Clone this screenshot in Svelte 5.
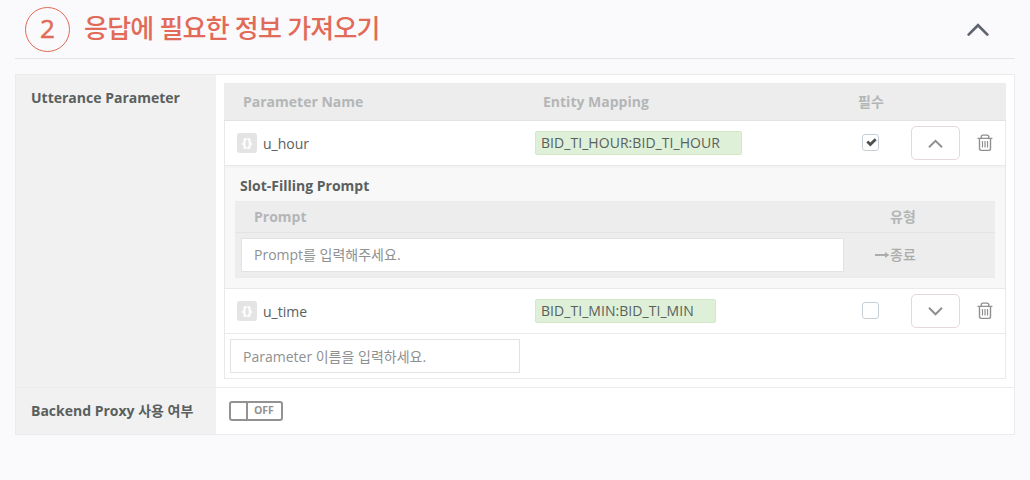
<script>
  const params = [
    { name: 'u_hour', entity: 'BID_TI_HOUR:BID_TI_HOUR', width: 207, required: true, open: true },
    { name: 'u_time', entity: 'BID_TI_MIN:BID_TI_MIN', width: 181, required: false, open: false }
  ];
</script>

<main>
  <header>
    <span class="step">2</span>
    <h1>응답에 필요한 정보 가져오기</h1>
    <svg class="fold" width="24" height="16" viewBox="0 0 24 16"><path d="M2.6 12.6 L12 3.2 L21.4 12.6" /></svg>
  </header>

  <section class="card">
    <div class="label first">Utterance Parameter</div>
    <div class="content">
      <div class="table">
        <div class="thead row">
          <span class="name">Parameter Name</span>
          <span class="entity">Entity Mapping</span>
          <span class="req">필수</span>
        </div>
        {#each params as p}
          <div class="row item">
            <div class="name"><span class="chip">&#123;&#125;</span><span class="pname">{p.name}</span></div>
            <div class="entity"><span class="tag" style="width:{p.width}px">{p.entity}</span></div>
            <div class="req">
              <span class="check">
                {#if p.required}
                  <svg width="17" height="17" viewBox="0 0 17 17"><path d="M5.3 7.6 L8.3 10.5 L13.7 5.2" /></svg>
                {/if}
              </span>
            </div>
            <button class="toggle" aria-label="toggle">
              <svg width="17" height="11" viewBox="0 0 17 11"><path d={p.open ? 'M2 9.3 L8.5 2.8 L15 9.3' : 'M2 1.8 L8.5 8.3 L15 1.8'} /></svg>
            </button>
            <svg class="trash" width="16" height="18" viewBox="0 0 16 18">
              <path d="M.6 4.4H15.4M4.3 4V2.5Q4.3 1.1 5.7 1.1H10.3Q11.7 1.1 11.7 2.5V4M2.5 4.4V14.6Q2.5 16.4 4.3 16.4H11.7Q13.5 16.4 13.5 14.6V4.4" />
              <path class="bars" d="M5.5 7V13.4M8 7V13.4M10.5 7V13.4" />
            </svg>
          </div>
          {#if p.open}
            <div class="slot">
              <h2>Slot-Filling Prompt</h2>
              <div class="prompt">
                <div class="phead"><span>Prompt</span><span>유형</span></div>
                <div class="pbody">
                  <div class="input">Prompt를 입력해주세요.</div>
                  <div class="end">
                    <svg width="15" height="8" viewBox="0 0 15 8"><path d="M0 3H10V1L14.4 4L10 7V5H0Z" /></svg><span>종료</span>
                  </div>
                </div>
              </div>
            </div>
          {/if}
        {/each}
        <div class="new"><div class="input">Parameter 이름을 입력하세요.</div></div>
      </div>
    </div>
    <div class="label second">Backend Proxy 사용 여부</div>
    <div class="content second">
      <div class="switch"><i></i><span>OFF</span></div>
    </div>
  </section>
</main>

<style>
  :global(body) { background: #fafafc; }
  * { box-sizing: border-box; }
  main {
    height: 480px;
    padding: 0 15px;
    background: #fafafc;
    font: 14px/20px 'Open Sans', 'Noto Sans CJK KR', sans-serif;
    color: #5a605e;
    white-space: nowrap;
  }
  header {
    display: flex;
    align-items: center;
    height: 59px;
    padding: 0 25px 0 10px;
    border-bottom: 1px solid #e5e5e7;
  }
  .step {
    width: 45px;
    height: 45px;
    margin-top: 1px;
    border: 1px solid #e26a58;
    border-radius: 50%;
    color: #e26a58;
    font-size: 26px;
    line-height: 41px;
    text-align: center;
    -webkit-text-stroke: .5px #e26a58;
  }
  h1 {
    margin: -3px 0 0 14px;
    font-size: 26px;
    font-weight: 500;
    line-height: 36px;
    letter-spacing: -.77px;
    color: #e26a58;
  }
  .fold { margin: 1px 0 0 auto; }
  svg path { fill: none; stroke: #909090; stroke-width: 1.5; }
  .fold path { stroke: #5f656e; stroke-width: 2.7; stroke-linecap: round; }
  .card {
    display: grid;
    grid-template-columns: 200px 1fr;
    grid-template-rows: 312px 47px;
    height: 361px;
    margin-top: 15px;
    border: 1px solid #ebebed;
    background: #fff;
  }
  .label { padding: 13px 0 0 15px; background: #f1f1f1; font-weight: 700; }
  .second { border-top: 1px solid #ebebeb; }
  .content { padding: 8px 8px 0; }
  .content.second { padding: 13px 0 0 13px; }
  .table { height: 296px; border: 1px solid #e9e9ea; border-top: 0; }
  .row {
    display: grid;
    grid-template-columns: 298px 312px 64px 49px 1fr;
    align-items: center;
    height: 45px;
    padding-left: 12px;
    border-bottom: 1px solid #e9e9ea;
  }
  .row.thead { height: 38px; margin: 0 -1px; padding-left: 13px; background: #ededee; border-color: #e2e2e4; color: #b4b6b6; font-weight: 700; }
  .thead .name { padding-left: 6px; }
  .thead .entity { padding-left: 8px; }
  .thead .req { padding-left: 11px; }
  .item .name { display: flex; align-items: center; }
  .chip {
    width: 20px;
    height: 20px;
    border-radius: 3px;
    background: #e4e4e4;
    color: #fff;
    font-size: 12px;
    font-weight: 800;
    line-height: 19px;
    text-align: center;
  }
  .pname { margin-left: 6px; padding-top: 1px; }
  .tag {
    display: block;
    height: 24px;
    padding-left: 5px;
    border: 1px solid #d3e8c6;
    border-radius: 2px;
    background: #dff0d8;
    line-height: 22px;
    letter-spacing: .05px;
  }
  .check {
    display: block;
    width: 17px;
    height: 17px;
    margin: -1px 0 0 15px;
    border: 1px solid #c6cfd6;
    border-radius: 3px;
  }
  .check svg { display: block; margin: -1px; }
  .check path { stroke: #4c514f; stroke-width: 2.8; }
  .toggle {
    display: flex;
    align-items: center;
    justify-content: center;
    width: 49px;
    height: 34px;
    padding: 0;
    border: 1px solid #e4d8db;
    border-radius: 5px;
    background: #fff;
  }
  .toggle path { stroke-width: 2; }
  .trash { margin: -1px 0 0 17px; }
  .trash path { stroke-width: 1.4; }
  .trash .bars { stroke-width: 1.2; }
  .slot {
    height: 123px;
    padding: 10px 10px 0;
    border-bottom: 1px solid #e9e9ea;
    background: #f8f8f8;
    box-shadow: inset 0 2px 3px -1px #eeeeee;
  }
  h2 { margin: 0 0 5px 5px; font-size: 14px; line-height: 20px; }
  .prompt { height: 77px; background: #ededee; border: 1px solid #ebebec; border-width: 1px 0; }
  .phead {
    display: grid;
    grid-template-columns: 636px 1fr;
    height: 31px;
    padding: 5px 0 0 19px;
    border-bottom: 1px solid #e4e4e5;
    color: #b4b6b6;
    font-weight: 700;
  }
  .pbody { display: flex; align-items: center; height: 44px; padding-left: 6px; }
  .input {
    width: 603px;
    height: 34px;
    padding-left: 12px;
    border: 1px solid #e2e2e3;
    background: #fff;
    line-height: 32px;
    color: #8e9191;
  }
  .end { display: flex; align-items: center; margin-left: 31px; color: #acacac; font-weight: 500; }
  .end path { fill: #acacac; stroke: none; }
  .new { padding: 5px; }
  .new .input { width: 290px; line-height: 34px; }
  .switch {
    display: flex;
    width: 54px;
    height: 20px;
    border: 2px solid #929292;
    border-radius: 3px;
    color: #929292;
    font: 700 10.5px/15px 'Open Sans', sans-serif;
  }
  .switch i { width: 17px; border-right: 2px solid #929292; }
  .switch span { margin-left: 6px; }
</style>
